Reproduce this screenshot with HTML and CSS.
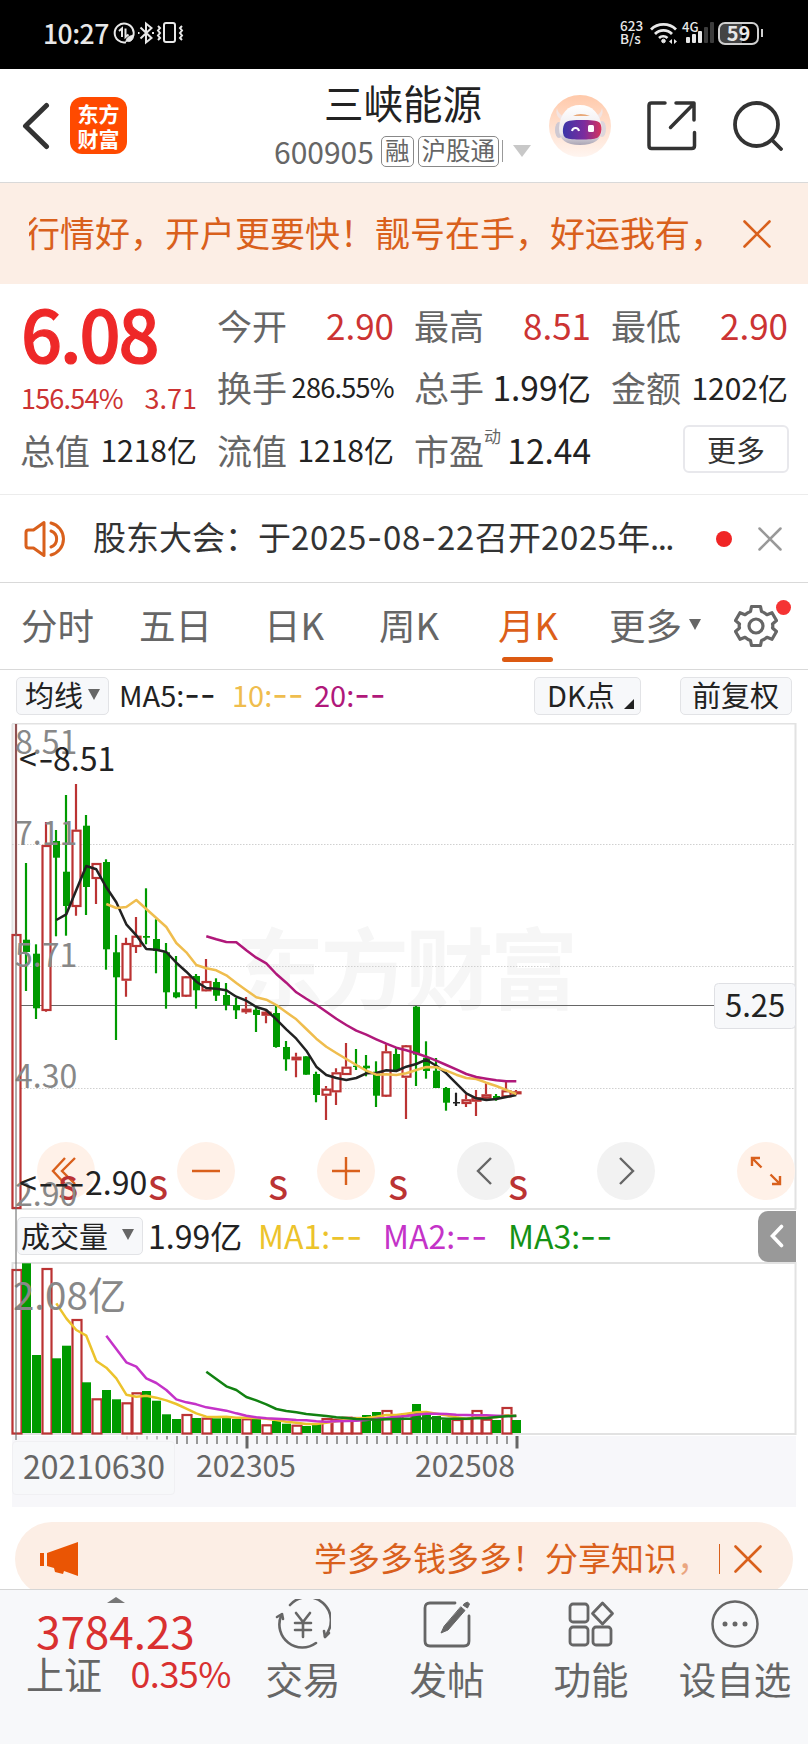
FILE: index.html
```html
<!DOCTYPE html>
<html lang="zh-CN">
<head>
  <meta charset="UTF-8">
  <meta name="viewport" content="width=device-width, initial-scale=1.0">
  <title>三峡能源 600905</title>
  <link rel="stylesheet" href="styles.css">
</head>
<body>
  <div class="status-bar">
    <div class="clock">10:27</div>
    <svg class="status-icons" width="72" height="24" viewBox="0 0 72 24" fill="none" stroke="#e8e8e8" stroke-width="2">
      <path d="M20 15.5A9.5 9.5 0 1 0 13 21.3"/>
      <path d="M6 10l3-2.5V16M12.500 7.500V16l3-2.500"/>
      <path d="M13 21c0-4 3-6.500 7.500-6.500 0 4.500-3 6.500-6 6" fill="#e8e8e8" stroke-width="1"/>
      <path d="M27.500 6.500l11 10.500-5.500 4.500v-19l5.500 4.500-11 10.500"/>
      <path d="M25 12h1.500M39 12h2" />
      <rect x="51" y="2" width="11" height="19" rx="2"/>
      <path d="M45 5l2 2-2 2.500 2 2.500-2 2.500 2 2.500-2 2M69 5l-2 2 2 2.500-2 2.500 2 2.500-2 2.500 2 2"/>
    </svg>
    <div class="net-speed"><span>623</span><span>B/s</span></div>
    <svg class="wifi" width="28" height="24" viewBox="0 0 28 24" fill="none" stroke="#e8e8e8" stroke-width="2.800">
      <path d="M1 8.500a18 18 0 0 1 25 0M5 13a12 12 0 0 1 17 0M9 17a6.500 6.500 0 0 1 8.500 0"/>
      <circle cx="13.500" cy="20" r="1.800" fill="#e8e8e8" stroke-width="1"/>
      <path d="M19 20.500l3-2.500v5zM27 20.500l-3-2.500v5z" fill="#e8e8e8" stroke="none"/>
    </svg>
    <div class="signal">
      <span class="signal-type">4G</span>
      <svg width="32" height="24" viewBox="0 0 32 24" fill="#e8e8e8">
        <rect x="4" y="16" width="4" height="6" rx="1"/><rect x="10" y="13" width="4" height="9" rx="1"/>
        <rect x="16" y="10" width="4" height="12" rx="1"/>
        <rect x="22" y="6" width="4" height="16" rx="1" fill="#3c3c3c"/><rect x="28" y="1" width="4" height="21" rx="1" fill="#3c3c3c"/>
      </svg>
    </div>
    <div class="battery">59</div>
    <div class="battery-tip"></div>
  </div>

  <div class="header">
    <svg class="back" width="28" height="48" viewBox="0 0 28 48" fill="none" stroke="#333" stroke-width="5" stroke-linecap="round" stroke-linejoin="round">
      <path d="M24.500 3.500L3.500 24l21 20.500"/>
    </svg>
    <div class="app-logo"><span>东方</span><span>财富</span></div>
    <div class="stock">
      <div class="stock-name">三峡能源</div>
      <div class="stock-code">
        <span>600905</span>
        <span class="tag">融</span>
        <span class="tag">沪股通</span>
        <i class="tag-line"></i>
        <i class="arrow-down"></i>
      </div>
    </div>
    <svg class="robot" width="62" height="62" viewBox="0 0 62 62">
      <defs>
        <linearGradient id="robotBg" x1="0" y1="0" x2="0" y2="1"><stop offset="0" stop-color="#ffc9aa"/><stop offset="1" stop-color="#fff5f0"/></linearGradient>
        <linearGradient id="robotFace" x1="0" y1="0" x2="1" y2="0"><stop offset="0" stop-color="#3a36a8"/><stop offset=".55" stop-color="#7b2c9e"/><stop offset="1" stop-color="#d6345c"/></linearGradient>
        <linearGradient id="robotHead" x1="0" y1="0" x2="0" y2="1"><stop offset="0" stop-color="#fff"/><stop offset=".7" stop-color="#ece8ec"/><stop offset="1" stop-color="#aaa4b4"/></linearGradient>
      </defs>
      <circle cx="31" cy="31" r="31" fill="url(#robotBg)"/>
      <path d="M8 13c1 5 4 8 9 9l-3 4c-5-3-8-7-6-13zM53 13c-1 5-4 8-9 9l3 4c5-3 8-7 6-13z" fill="#f3e4e2"/>
      <ellipse cx="10" cy="35" rx="4" ry="8" fill="#cfc9d2"/><ellipse cx="53" cy="34" rx="4" ry="8" fill="#ddd6dc"/>
      <path d="M31 10c12 0 20 8 22 23 0 12-8 17-22 17S10 45 10 33C11 18 19 10 31 10z" fill="url(#robotHead)"/>
      <path d="M24 21q7-4 17 0z" fill="#e8a878"/>
      <path d="M16 28c3-3 9-3 17-3s15 0 18 3c3 5 1 13-3 15-5 2-26 2-31 0-4-2-4-11-1-15z" fill="url(#robotFace)"/>
      <path d="M23 36c1-4 6-4 7 0" fill="none" stroke="#fff" stroke-width="2"/>
      <rect x="39" y="30" width="6" height="7" rx="1.500" fill="#fff"/>
    </svg>
    <svg class="share" width="50" height="50" viewBox="0 0 50 50" fill="none" stroke="#333" stroke-width="3.500" stroke-linecap="round" stroke-linejoin="round">
      <path d="M18 2H4.500Q2 2 2 4.500v40Q2 47.500 4.500 47.500h40Q47.500 47.500 47.500 45V31.500M29 2h18v17M47 2.500L23.500 26.500"/>
    </svg>
    <svg class="search" width="50" height="50" viewBox="0 0 50 50" fill="none" stroke="#333" stroke-width="3.800" stroke-linecap="round">
      <circle cx="23.500" cy="23.500" r="21.500"/><path d="M39 39l9 9"/>
    </svg>
  </div>

  <div class="banner">
    <div class="banner-window"><div class="banner-text">行情好，开户更要快！靓号在手，好运我有，</div></div>
    <svg width="28" height="28" viewBox="0 0 28 28" stroke="#d9601c" stroke-width="2.600" stroke-linecap="round"><path d="M1.500 1.500l25 25M26.500 1.500l-25 25"/></svg>
  </div>

  <div class="quote">
    <div class="quote-price">
      <div class="price">6.08</div>
      <div class="change"><span>156.54%</span><span>3.71</span></div>
    </div>
    <div class="cell"><span class="name">今开</span><span class="value red">2.90</span></div>
    <div class="cell"><span class="name">最高</span><span class="value red">8.51</span></div>
    <div class="cell"><span class="name">最低</span><span class="value red">2.90</span></div>
    <div class="cell"><span class="name">换手</span><span class="value small">286.55%</span></div>
    <div class="cell"><span class="name">总手</span><span class="value mid">1.99亿</span></div>
    <div class="cell"><span class="name">金额</span><span class="value">1202亿</span></div>
    <div class="cell"><span class="name">总值</span><span class="value">1218亿</span></div>
    <div class="cell"><span class="name">流值</span><span class="value">1218亿</span></div>
    <div class="cell"><span class="name">市盈<sup>动</sup></span><span class="value mid">12.44</span></div>
    <div class="cell cell-more"><button class="more-btn">更多</button></div>
  </div>

  <div class="notice">
    <svg width="44" height="38" viewBox="0 0 44 38" fill="none" stroke="#d9601c" stroke-width="3" stroke-linejoin="round" stroke-linecap="round">
      <path d="M20 2.500v33L9.500 28H4.500Q2 28 2 25.500v-13Q2 10 4.500 10h5z"/>
      <path d="M27 11a8.500 8.500 0 0 1 0 16M27 3a16.500 16.500 0 0 1 0 32"/>
    </svg>
    <div class="notice-text">股东大会：于<span class="num">2025<b>-</b>08<b>-</b>22</span>召开<span class="num">2025</span>年<span class="dots">...</span></div>
    <i class="dot"></i>
    <svg width="24" height="24" viewBox="0 0 24 24" stroke="#999" stroke-width="2.500" stroke-linecap="round"><path d="M1.500 1.500l21 21M22.500 1.500l-21 21"/></svg>
  </div>

  <div class="tabs">
    <div class="tab">分时</div>
    <div class="tab">五日</div>
    <div class="tab">日K</div>
    <div class="tab">周K</div>
    <div class="tab active">月K</div>
    <div class="tab">更多<i class="tri"></i></div>
    <div class="settings">
      <svg width="44" height="44" viewBox="-22 -22 44 44" fill="none" stroke="#666" stroke-width="3.200" stroke-linejoin="round">
        <path d="M-4.500-19.500h9l1 5q3 1 5.500 3.200l5-2 4.500 7.800-4 3.500q.6 2 0 4l4 3.500-4.500 7.800-5-2Q8.500 13.500 5.500 14.500l-1 5h-9l-1-5Q-8.500 13.500-11 11.300l-5 2-4.500-7.800 4-3.500q-.6-2 0-4l-4-3.500 4.500-7.800 5 2Q-8.500-13.500-5.500-14.500z"/>
        <circle r="7"/>
      </svg>
      <i class="badge"></i>
    </div>
  </div>

  <div class="charts">
    <div class="ma-row">
      <div class="chip">均线<i class="tri"></i></div>
      <span class="ma5">MA5:<b>--</b></span>
      <span class="ma10">10:<b>--</b></span>
      <span class="ma20">20:<b>--</b></span>
      <div class="chip dk">DK点<i class="corner"></i></div>
      <div class="chip fq">前复权</div>
    </div>

    <svg id="kline" class="kline" width="808" height="487" viewBox="0 723 808 487">
      <text class="watermark" x="236" y="1002" textLength="342">东方财富</text>
      <path class="frame" d="M12 723.500H795.500V1209.500"/>
      <path class="frame" d="M12 1209H796M12.500 724V1209"/>
      <path class="dotted" d="M12 844.500H795M12 966.500H795M12 1088.500H795"/>
      <path d="M12 1005.500H714" stroke="#666"/>
      <g id="candles"></g>
      <g class="round">
        <circle cx="66" cy="1171" r="29"/><circle cx="206" cy="1171" r="29"/><circle cx="346" cy="1171" r="29"/><circle cx="766" cy="1171" r="29"/>
        <circle class="grey" cx="486" cy="1171" r="29"/><circle class="grey" cx="626" cy="1171" r="29"/>
      </g>
      <g class="tools">
        <path d="M65 1158l-12 13 12 13M75 1158l-13 13 13 13"/>
        <path d="M192 1171h28M332 1171h28M346 1157v28"/>
        <path d="M752 1166v-8h8M752.500 1158.500l9 9M780 1176v8h-8M779.500 1183.500l-9-9"/>
        <path class="grey" d="M491 1158l-13 13 13 13M620 1158l13 13-13 13"/>
      </g>
      <g class="sell">
        <text x="58" y="1200">S</text><text x="148" y="1200">S</text><text x="268" y="1200">S</text><text x="388" y="1200">S</text><text x="508" y="1200">S</text>
      </g>
      <g class="axis-label">
        <text x="15" y="754">8.51</text><text x="15" y="845">7.11</text><text x="15" y="967">5.71</text><text x="15" y="1088">4.30</text><text x="15" y="1206">2.90</text>
      </g>
      <g class="mark">
        <text x="19" y="771">&lt;</text><text class="dash" x="38" y="771" textLength="16" lengthAdjust="spacingAndGlyphs">-</text><text x="53" y="771">8.51</text>
        <text x="19" y="1195">&lt;</text><text class="dash" x="38" y="1195" textLength="47" lengthAdjust="spacingAndGlyphs">---</text><text x="85" y="1195">2.90</text>
      </g>
      <rect x="714.500" y="983.500" width="81" height="45" rx="4" fill="#f7f8fa" stroke="#dfe0e4"/>
      <text x="725" y="1017" font-size="31" fill="#222">5.25</text>
    </svg>

    <div class="vol-row">
      <div class="chip">成交量<i class="tri"></i></div>
      <span class="vol">1.99亿</span>
      <span class="vma1">MA1:<b>--</b></span>
      <span class="vma2">MA2:<b>--</b></span>
      <span class="vma3">MA3:<b>--</b></span>
      <div class="flap">
        <svg width="14" height="24" viewBox="0 0 14 24" fill="none" stroke="#fff" stroke-width="3.600" stroke-linecap="round"><path d="M11.500 2.500L2.500 12l9 9.500"/></svg>
      </div>
    </div>

    <svg id="volume" class="volume" width="808" height="174" viewBox="0 1262 808 174">
      <rect class="frame" x="12.500" y="1263" width="783" height="171"/>
      <g id="bars"></g>
      <text x="13" y="1310" font-size="38.500" fill="#888">2.08亿</text>
    </svg>

    <div class="date-axis">
      <svg id="ticks" width="784" height="14" viewBox="12 1436 784 14"></svg>
      <div class="dates">
        <span class="date-box">20210630</span>
        <span>202305</span>
        <span>202508</span>
      </div>
    </div>
    <div class="crosshair"></div>
  </div>

  <div class="promo-wrap">
    <div class="promo">
      <svg width="40" height="36" viewBox="0 0 40 36" fill="#ea5504"><path d="M0 12h4v13H0zM7 12L38 1v34l-14-5-1 3-8-2-1-4-7-2z"/></svg>
      <div class="promo-text">学多多钱多多！分享知识<span>，</span></div>
      <i class="promo-line"></i>
      <svg width="28" height="28" viewBox="0 0 28 28" stroke="#d9601c" stroke-width="2.600" stroke-linecap="round"><path d="M1.500 1.500l25 25M26.500 1.500l-25 25"/></svg>
    </div>
  </div>

  <div class="nav">
    <div class="index">
      <i class="tri-up"></i>
      <div class="index-value">3784.23</div>
      <div class="index-row"><span>上证</span><span class="red">0.35%</span></div>
    </div>
    <div class="nav-item">
      <svg width="56" height="50" viewBox="0 0 56 50" fill="none" stroke="#666" stroke-width="2.600" stroke-linecap="round" stroke-linejoin="round">
        <path d="M15 6a23 23 0 0 1 35 31M41 44A23 23 0 0 1 6 17"/>
        <path d="M2 18l5-3 1 5M54 34l-4 4-1-6"/>
        <path d="M21 14l7 9 7-9M28 23v15M20 24h16M20 31h16"/>
      </svg>
      <span>交易</span>
    </div>
    <div class="nav-item">
      <svg width="50" height="50" viewBox="0 0 50 50" fill="none" stroke="#666" stroke-width="2.800" stroke-linecap="round" stroke-linejoin="round">
        <path d="M33 4H8Q3 4 3 9v33q0 5 5 5h34q5 0 5-5V17"/>
        <path d="M39 8l4 3.500L26 31l-7 3 3-6.500z" fill="#666" stroke-width="1"/>
        <path d="M42.500 4.500l3-1.500 2 2-2 4-4-2.500z" fill="#666" stroke-width="1"/>
      </svg>
      <span>发帖</span>
    </div>
    <div class="nav-item">
      <svg width="50" height="50" viewBox="0 0 50 50" fill="none" stroke="#666" stroke-width="2.800" stroke-linejoin="round">
        <rect x="4" y="5" width="18" height="18" rx="3"/><rect x="4" y="28" width="18" height="18" rx="3"/><rect x="27" y="28" width="18" height="18" rx="3"/>
        <path d="M36.500 4l10 10.500-10 10.500-10-10.500z"/>
      </svg>
      <span>功能</span>
    </div>
    <div class="nav-item">
      <svg width="50" height="50" viewBox="0 0 50 50" fill="none" stroke="#666" stroke-width="2.500">
        <circle cx="25" cy="25" r="22.500"/>
        <g fill="#666" stroke="none"><circle cx="15" cy="25" r="2.500"/><circle cx="25" cy="25" r="2.500"/><circle cx="35" cy="25" r="2.500"/></g>
      </svg>
      <span>设自选</span>
    </div>
  </div>

  <script src="script.js"></script>
</body>
</html>
```
FILE: styles.css
```css
body {
  margin: 0;
  width: 808px;
  height: 1744px;
  overflow: hidden;
  background: #fff;
  color: #222;
  font-family: "Noto Sans CJK SC", sans-serif;
}

svg {
  display: block;
  flex-shrink: 0;
}

text {
  font-family: "Noto Sans CJK SC", sans-serif;
}

i {
  display: block;
}

.red {
  color: #cc3333;
}

/* status bar */
.status-bar {
  display: flex;
  align-items: center;
  height: 69px;
  padding: 0 0 3px 43px;
  box-sizing: border-box;
  background: #000;
  color: #e8e8e8;
}

.clock {
  width: 70px;
  font-size: 26.5px;
  font-weight: 500;
  line-height: 30px;
  letter-spacing: -0.5px;
}

.net-speed {
  display: flex;
  flex-direction: column;
  width: 29px;
  margin-left: 435px;
  margin-right: 1px;
  padding-bottom: 2px;
  font-size: 13.5px;
  font-weight: 500;
  line-height: 13px;
}

.signal {
  position: relative;
  width: 32px;
  margin-left: 4px;
}

.signal-type {
  position: absolute;
  left: 0;
  top: -1px;
  font-size: 13px;
  font-weight: 500;
  line-height: 14px;
}

.battery {
  width: 37px;
  height: 19px;
  margin-left: 4px;
  border: 2px solid #cfcfcf;
  border-radius: 7px;
  background: linear-gradient(90deg, #444 59%, #000 59%);
  font-size: 20px;
  font-weight: bold;
  line-height: 17px;
  text-align: center;
}

.battery-tip {
  width: 2px;
  height: 8px;
  margin-left: 2px;
  background: #cfcfcf;
}

/* header */
.header {
  display: flex;
  align-items: center;
  height: 113px;
  border-bottom: 1px solid #d9d9d9;
}

.back {
  margin-left: 22px;
}

.app-logo {
  display: flex;
  flex-direction: column;
  justify-content: center;
  width: 57px;
  height: 57px;
  margin-left: 20px;
  border-radius: 12px;
  background: #ff4a00;
  color: #fff;
  font-size: 21px;
  font-weight: bold;
  line-height: 25px;
  text-align: center;
}

.stock {
  width: 260px;
  margin-left: 147px;
}

.stock-name {
  margin-left: 50px;
  font-size: 39.5px;
  line-height: 52px;
}

.stock-code {
  display: flex;
  align-items: center;
  height: 47px;
  padding-bottom: 1px;
  color: #666;
  font-size: 30px;
  line-height: 40px;
}

.tag {
  height: 29px;
  margin-left: 4px;
  padding: 0 3px;
  border: 1px solid #888;
  border-radius: 5px;
  font-size: 24.5px;
  line-height: 25px;
}

.stock-code span:first-child {
  width: 103px;
}

.tag-line {
  width: 1px;
  height: 22px;
  margin-left: 3px;
  background: #999;
}

.arrow-down {
  margin-left: 10px;
  border: 9px solid transparent;
  border-top: 12px solid #c8c8c8;
  border-bottom: 0;
}

.robot {
  margin-left: 15px;
}

.share {
  margin-left: 36px;
}

.search {
  margin-left: 36px;
}

/* account banner */
.banner {
  display: flex;
  align-items: center;
  height: 101px;
  background: #fceee5;
}

.banner-window {
  width: 678px;
  margin-left: 29px;
  margin-right: 36px;
  padding-bottom: 4px;
  overflow: hidden;
}

.banner-text {
  margin-left: -4px;
  color: #d9601c;
  font-size: 35px;
  white-space: nowrap;
}

/* quote */
.quote {
  display: grid;
  grid-template-columns: repeat(4, 176px);
  grid-template-rows: repeat(3, 62.5px);
  column-gap: 21px;
  height: 201px;
  padding: 9px 21px 0;
  border-bottom: 1px solid #ececec;
}

.quote-price {
  grid-row: span 2;
}

.price {
  height: 84px;
  color: #ee2828;
  font-size: 72px;
  font-weight: 500;
  line-height: 77px;
  letter-spacing: -2px;
  -webkit-text-stroke: 1.2px #ee2828;
}

.change {
  display: flex;
  justify-content: space-between;
  color: #cc3333;
  font-size: 27px;
  line-height: 42px;
}

.change span:first-child {
  letter-spacing: -0.8px;
}

.cell {
  display: flex;
  align-items: center;
  justify-content: space-between;
  white-space: nowrap;
}

.name {
  position: relative;
  margin-left: -1px;
  color: #666;
  font-size: 35px;
}

.name sup {
  position: absolute;
  left: 70px;
  top: 1px;
  font-size: 17px;
  line-height: 22px;
}

.value {
  font-size: 30px;
}

.value.red {
  font-size: 35px;
}

.value.small {
  font-size: 27px;
  letter-spacing: -0.7px;
}

.value.mid {
  font-size: 33.5px;
}

.cell-more {
  justify-content: flex-end;
}

.more-btn {
  width: 106px;
  height: 48px;
  padding: 0;
  margin-right: -1px;
  border: 2px solid #e8e8ec;
  border-radius: 6px;
  background: #fff;
  color: #333;
  font-family: inherit;
  font-size: 29px;
  line-height: 38px;
}

/* notice */
.notice {
  display: flex;
  align-items: center;
  height: 87px;
  padding-left: 24px;
  border-bottom: 1px solid #d9d9d9;
}

.notice-text {
  width: 598px;
  margin-left: 25px;
  padding-bottom: 5px;
  color: #333;
  font-size: 33px;
  white-space: nowrap;
}

.num {
  letter-spacing: 0.7px;
}

.dots {
  letter-spacing: -1.5px;
}

b {
  font-family: Inter, sans-serif;
  font-weight: normal;
}

.dot {
  width: 16px;
  height: 16px;
  margin: 0 26px 0 25px;
  border-radius: 50%;
  background: #f02525;
}

/* tabs */
.tabs {
  display: grid;
  grid-template-columns: 118px 125px 115px 119px 111px 127px 60px;
  height: 86px;
  padding-left: 21px;
  border-bottom: 1px solid #d9d9d9;
}

.tab {
  position: relative;
  display: flex;
  align-items: center;
  padding-bottom: 3px;
  color: #666;
  font-size: 36.5px;
}

.tab.active {
  color: #dc5f19;
}

.tab.active::after {
  content: "";
  position: absolute;
  left: 4px;
  bottom: 7px;
  width: 51px;
  height: 5px;
  border-radius: 3px;
  background: #dc5a12;
}

.tri {
  border: 6px solid transparent;
  border-top: 11px solid #666;
  border-bottom: 0;
}

.tab .tri {
  margin-left: 7px;
}

.settings {
  position: relative;
  align-self: center;
  margin-left: -2px;
}

.badge {
  position: absolute;
  left: 42px;
  top: -4px;
  width: 15px;
  height: 15px;
  border-radius: 50%;
  background: #f53333;
}

/* charts */
.charts {
  position: relative;
}

.ma-row {
  display: flex;
  align-items: center;
  box-sizing: border-box;
  height: 53px;
  padding: 0 0 2px 16px;
  font-size: 29px;
}

.ma-row span {
  padding-bottom: 3px;
}

.ma-row b {
  font-size: 34px;
  line-height: 20px;
}

.vol-row b {
  font-size: 35px;
  line-height: 20px;
}

.chip {
  display: flex;
  align-items: center;
  box-sizing: border-box;
  height: 38px;
  padding-left: 8px;
  border: 1px solid #e2e3e6;
  border-radius: 5px;
  background: #f7f8fa;
  font-size: 29px;
  line-height: 30px;
  padding-bottom: 3px;
}

.ma-row .chip:first-child {
  width: 93px;
}

.chip .tri {
  margin-left: 5px;
}

.ma5 {
  width: 113px;
  margin-left: 10px;
}

.ma10 {
  width: 82px;
  color: #efbd4e;
}

.ma20 {
  width: 220px;
  color: #b0187a;
}

.chip.dk {
  width: 107px;
  padding-left: 12px;
}

.corner {
  align-self: flex-end;
  margin: 0 0 2px 9px;
  border-left: 10px solid transparent;
  border-bottom: 10px solid #222;
}

.chip.fq {
  width: 112px;
  margin-left: 39px;
  padding-left: 11px;
}

.frame {
  fill: none;
  stroke: #e2e2e2;
  stroke-width: 2;
}

.dotted {
  stroke: #d0d0d0;
  stroke-dasharray: 1.5 1.5;
}

.watermark {
  fill: #f6f6f6;
  font-size: 88px;
  font-weight: bold;
}

.round circle {
  fill: #fff1e8;
}

.round .grey {
  fill: #f2f2f2;
}

.tools {
  fill: none;
  stroke: #d9601c;
  stroke-width: 2.4;
}

.tools .grey {
  stroke: #666;
}

.sell {
  fill: #bb3333;
  font-size: 33px;
  font-weight: 500;
}

.axis-label {
  fill: #888;
  font-size: 32px;
}

.mark {
  fill: #222;
  font-size: 32px;
}

.mark .dash {
  font-family: Inter, sans-serif;
}

.vol-row {
  display: flex;
  align-items: center;
  height: 52px;
  padding-left: 17px;
  font-size: 32px;
}

.vol-row span {
  padding-bottom: 3px;
}

.vol-row .chip {
  width: 126px;
  padding-left: 3px;
}

.vol-row .chip .tri {
  margin-left: 14px;
}

.vol {
  width: 110px;
  margin-left: 5px;
}

.vma1 {
  width: 125px;
  color: #ecc32c;
}

.vma2 {
  width: 125px;
  color: #c433c8;
}

.vma3 {
  width: 250px;
  color: #159215;
}

.flap {
  display: flex;
  align-items: center;
  justify-content: center;
  width: 38px;
  height: 51px;
  border-radius: 10px 0 0 10px;
  background: #999;
}

.date-axis {
  width: 784px;
  height: 71px;
  margin-left: 12px;
  background: #f7f7fa;
}

.dates {
  display: flex;
  margin-top: -9px;
  color: #666;
  font-size: 30px;
  line-height: 46px;
}

.dates span + span {
  width: 104px;
  margin-left: 21px;
}

.dates span:last-child {
  margin-left: 115px;
}

.date-box {
  width: 151px;
  height: 52px;
  padding-left: 10px;
  border: 1px solid #f0f0f3;
  border-radius: 4px;
  background: #f7f8fa;
  font-size: 32px;
}

.crosshair {
  position: absolute;
  left: 15px;
  top: 54px;
  width: 2px;
  height: 716px;
  background: rgba(110, 110, 110, 0.55);
}

/* promo */
.promo-wrap {
  height: 67px;
  padding: 15px 15px 0;
  overflow: hidden;
}

.promo {
  display: flex;
  align-items: center;
  height: 74px;
  padding-left: 25px;
  border-radius: 37px;
  background: #fceee5;
}

.promo-text {
  width: 386px;
  margin-left: 234px;
  padding-bottom: 4px;
  color: #d9601c;
  font-size: 33px;
  white-space: nowrap;
  overflow: hidden;
}

.promo-text span {
  opacity: 0.5;
}

.promo-line {
  width: 1px;
  height: 30px;
  margin: 0 14px 0 19px;
  background: #d9601c;
}

/* bottom nav */
.nav {
  display: grid;
  grid-template-columns: 231px repeat(4, 144px);
  height: 154px;
  border-top: 1px solid #d5d5d5;
  background: #f7f8fa;
}

.index {
  color: #d93030;
}

.tri-up {
  width: 0;
  margin: 7px 0 0 107px;
  border: 9px solid transparent;
  border-bottom: 6px solid #777;
  border-top: 0;
}

.index-value {
  margin-left: 36px;
  padding-top: 2px;
  font-size: 44px;
  line-height: 50px;
}

.index-row {
  display: flex;
  justify-content: space-between;
  padding: 0 0 0 26px;
  color: #666;
  font-size: 38px;
  line-height: 35px;
}

.index-row .red {
  color: #d93030;
  font-size: 36px;
  letter-spacing: -0.5px;
}

.nav-item {
  display: flex;
  flex-direction: column;
  align-items: center;
  padding-top: 9px;
  color: #666;
  font-size: 37.5px;
  line-height: 58px;
  white-space: nowrap;
}
```
FILE: script.js
```js
const RED = '#bb3333';
const GREEN = '#009a00';
const STEP = 10;
const X0 = 16;

// [colour, body top, body bottom, wick top, wick bottom]
const candles = [
  ['r', 934, 1209, 724, 1209], ['g', 939.7, 952, 863, 991], ['g', 953.7, 1008.3, 944.3, 1019],
  ['r', 845, 1011, 822, 1011.7], ['g', 841, 857.7, 830, 936.3], ['g', 871.7, 906, 795, 935.7],
  ['r', 829.7, 907, 784, 915.7], ['g', 825.7, 887, 815, 915], ['r', 863, 879, 863, 904],
  ['g', 862, 949.3, 859.3, 969.7], ['g', 952.3, 977.3, 935, 1040], ['r', 943, 980.7, 937.7, 996.7],
  ['r', 935.7, 947, 917, 953], ['g', 936, 937.7, 888.3, 944.3], ['g', 939, 951, 919.3, 973.3],
  ['g', 952.3, 992.3, 943, 1008.7], ['g', 992.3, 997.3, 956, 998.3], ['r', 976.3, 996.7, 977, 996],
  ['g', 976, 990.3, 974, 1008.7], ['r', 981, 991.3, 959, 991], ['g', 982, 995.7, 978.3, 1001],
  ['g', 995, 1005, 983, 1010.3], ['g', 1005, 1010.3, 998, 1019], ['r', 1008.7, 1012.3, 997, 1013.7],
  ['g', 1009.7, 1015, 1006.7, 1032], ['r', 1011.7, 1015.7, 1011, 1023.3], ['g', 1013, 1047, 1005, 1047.7],
  ['g', 1047, 1059.3, 1041, 1070.7], ['r', 1056.7, 1060.3, 1052.7, 1077.3], ['g', 1056.3, 1074.7, 1056.3, 1074.7],
  ['g', 1074, 1095, 1071.7, 1102.3], ['r', 1088.7, 1095.7, 1086, 1120], ['r', 1072.3, 1092.3, 1068.3, 1105],
  ['r', 1066.7, 1075, 1043, 1075], ['g', 1065.7, 1067, 1049, 1070], ['g', 1065.7, 1068.3, 1055, 1076.3],
  ['g', 1071.7, 1095.7, 1061.3, 1107], ['r', 1051.3, 1096.7, 1044.3, 1096], ['g', 1054, 1070.3, 1047.7, 1070.3],
  ['r', 1045.3, 1077.7, 1046, 1119], ['g', 1006.7, 1054.7, 1006, 1086], ['g', 1057.7, 1071, 1041.3, 1078.7],
  ['g', 1070.7, 1088, 1058, 1088], ['g', 1088, 1102.7, 1087, 1110.7], ['k', 1102, 1103.5, 1092.7, 1106],
  ['r', 1099.3, 1104, 1094.3, 1107], ['r', 1097.3, 1101.7, 1090, 1116], ['r', 1094.3, 1098.7, 1083.3, 1098],
  ['g', 1096, 1099, 1094, 1100.7], ['r', 1090.3, 1097.3, 1081.7, 1097], ['r', 1091.3, 1093.3, 1090, 1094.7]
];

const ma5 = [920, 914.3, 890, 866, 869.3, 887.3, 902.3, 924.3, 935.3, 949, 949.7, 952, 962.7, 971.7, 981.7, 988,
  988.7, 990.3, 996.7, 1000.7, 1007, 1010, 1019.3, 1029.3, 1038.7, 1050.7, 1066.7, 1075, 1078, 1080, 1078, 1073.3,
  1073, 1070.3, 1071, 1066.7, 1064, 1059.7, 1065.7, 1073.3, 1083.3, 1093.3, 1098.3, 1100, 1099, 1097, 1095];
const ma10 = [904, 908, 907, 900, 909, 918, 927, 943, 952.3, 965, 968.3, 970.3, 975.3, 983, 990.3, 997.3, 999.7,
  1005, 1012.3, 1019.3, 1029, 1038.7, 1046.7, 1053, 1059, 1065, 1070.7, 1074.7, 1074.3, 1075, 1073.3, 1070, 1067,
  1067.3, 1070.7, 1074.7, 1078, 1079, 1082.7, 1086, 1090, 1094];
const ma20 = [936.3, 939.3, 942, 942.3, 950.3, 957.7, 963.3, 974, 982.7, 992.3, 998.7, 1004.7, 1011.7, 1018.7, 1025,
  1030.7, 1034.7, 1039.3, 1043.7, 1047.7, 1050.3, 1053.3, 1056.7, 1060.7, 1065, 1069.3, 1074, 1077, 1078.7, 1080.3,
  1081.3, 1081.3];

const volumes = [1269, 1263.3, 1355, 1268, 1358.3, 1345.7, 1319, 1382.3, 1398.3, 1390, 1399.3, 1402.3, 1392.3, 1391,
  1400.7, 1414.3, 1419, 1414, 1418, 1417.7, 1418.3, 1417.3, 1419, 1418.3, 1418.7, 1424.3, 1421, 1423.7, 1424.7, 1426,
  1424, 1418, 1418.7, 1416.7, 1417, 1415, 1412, 1410, 1416, 1413.3, 1404, 1413, 1416, 1420, 1419, 1418, 1410, 1418.7,
  1420, 1407, 1420];

// r: hollow bar, g: filled bar
const volumeColors = 'rggrggrgrggrrggggrgrgggrgrggrggrrrrggrgrggggrrrrgrg';

// volume averages, in thirds of a pixel below y = 1200
const vma1 = [310, 355, 390, 407, 483, 503, 535, 584, 590, 587, 593, 601, 612, 626, 640, 650, 651, 650, 653, 653, 654,
  656, 660, 665, 668, 672, 672, 668, 664, 660, 655, 654, 650, 645, 645, 641, 637, 636, 641, 646, 652, 656, 652, 650,
  652, 646, 648].map(third);
const vma2 = [407, 447, 487, 500, 535, 549, 570, 598, 607, 613, 622, 627, 632, 640, 647, 652, 655, 656, 658, 660, 661,
  664, 665, 664, 663, 662, 660, 656, 654, 651, 648, 644, 641, 641, 642, 644, 645, 646, 646, 647, 648, 648].map(third);
const vma3 = [515, 537, 559, 570, 591, 601, 613, 627, 633, 637, 642, 645, 648, 652, 654, 657, 658, 659, 658, 657, 656,
  656, 655, 655, 656, 656, 656, 655, 655, 651, 649, 647].map(third);

function third(v) {
  return 1200 + v / 3;
}

function line(values, color) {
  const start = candles.length - values.length;
  const points = values.map((y, i) => `${X0 + 0.3 + (start + i) * STEP},${y}`).join(' ');
  return `<polyline points="${points}" fill="none" stroke="${color}" stroke-width="2.5" stroke-linejoin="round"/>`;
}

function drawCandles() {
  let out = '';
  candles.forEach(([c, top, bottom, high, low], i) => {
    const x = X0 + i * STEP;
    const color = c === 'r' ? RED : c === 'g' ? GREEN : '#222';
    if (c === 'r') {
      out += `<path d="M${x} ${high}V${top}M${x} ${bottom}V${low}" stroke="${color}" stroke-width="2.2"/>`;
      const h = Math.max(bottom - top - 2, 1);
      out += `<rect x="${x - 3.5}" y="${top + 1}" width="8" height="${h}" fill="#fff" stroke="${color}" stroke-width="2.2"/>`;
    } else {
      out += `<path d="M${x} ${high}V${low}" stroke="${color}" stroke-width="2.2"/>`;
      out += `<rect x="${x - 3}" y="${top}" width="7" height="${bottom - top}" fill="${color}"/>`;
    }
  });
  out += line(ma5, '#222') + line(ma10, '#efbd4e') + line(ma20, '#b0187a');
  document.getElementById('candles').innerHTML = out;
}

function drawVolume() {
  let out = '';
  volumes.forEach((top, i) => {
    const x = X0 + i * STEP;
    if (volumeColors[i] === 'r') {
      out += `<rect x="${x - 3.5}" y="${top + 1}" width="9" height="${1432.5 - top}" fill="#fff" stroke="${RED}" stroke-width="2.2"/>`;
    } else {
      out += `<rect x="${x - 4}" y="${top}" width="9" height="${1433 - top}" fill="${GREEN}"/>`;
    }
  });
  out += line(vma1, '#ecc32c') + line(vma2, '#c433c8') + line(vma3, '#128212');
  document.getElementById('bars').innerHTML = out;
}

function drawTicks() {
  let out = '';
  for (let i = 11; i < candles.length; i++) {
    const x = X0 + i * STEP + 1;
    const big = i === 23 || i === 50;
    const opacity = i < 15 ? (i - 9) / 8 : 1;
    out += `<path d="M${x} 1436V${big ? 1448.5 : i < 16 ? 1439.5 : 1444}" stroke="${big ? '#666' : '#999'}" stroke-width="${big ? 3 : 2}" opacity="${opacity}"/>`;
  }
  document.getElementById('ticks').innerHTML = out;
}

drawCandles();
drawVolume();
drawTicks();
```
